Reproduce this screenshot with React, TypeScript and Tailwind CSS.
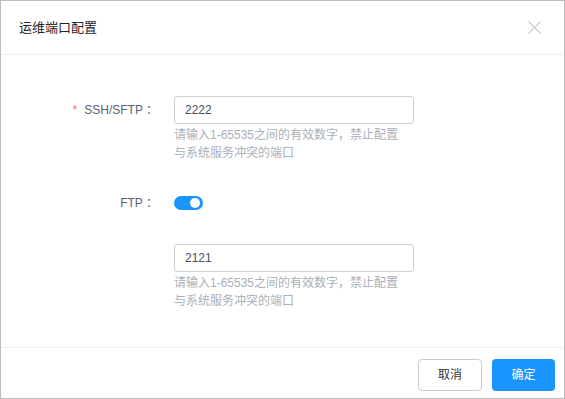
import { useState } from "react";

function Toggle({ on, onChange }: { on: boolean; onChange: (v: boolean) => void }) {
  return (
    <button
      type="button"
      onClick={() => onChange(!on)}
      className={`relative h-[14px] w-[29px] rounded-full ${on ? "bg-[#1a94ff]" : "bg-[#dcdfe6]"}`}
    >
      <span
        className={`absolute top-[2px] h-[10px] w-[10px] rounded-full bg-white ${on ? "left-[16px]" : "left-[3px]"}`}
      />
    </button>
  );
}

function PortField({ value, onChange }: { value: string; onChange: (v: string) => void }) {
  return (
    <div className="w-[240px]">
      <input
        className="h-[28px] w-full rounded-[3px] border border-[#c8d0db] px-[10px] text-[12px] text-[#4a4f57] outline-none"
        value={value}
        onChange={(e) => onChange(e.target.value)}
      />
      <p className="mt-[2px] text-[12px] leading-[18px] text-[#a9b0ba]">
        请输入1-65535之间的有效数字，禁止配置
        <br />
        与系统服务冲突的端口
      </p>
    </div>
  );
}

export default function App() {
  const [ssh, setSsh] = useState("2222");
  const [ftpOn, setFtpOn] = useState(true);
  const [ftp, setFtp] = useState("2121");

  return (
    <div
      className="flex h-[399px] w-[565px] flex-col border border-[#bdbdbd] bg-white"
      style={{ fontFamily: '"Liberation Sans", "Noto Sans CJK SC", sans-serif' }}
    >
      <div className="flex h-[54px] shrink-0 items-center justify-between border-b border-[#eceef2] pl-[18px] pr-[23px]">
        <h2 className="text-[13px] text-[#1f2329]">运维端口配置</h2>
        <svg width="13" height="13" viewBox="0 0 13 13" className="text-[#c5ccd6]">
          <path d="M0.5 0.5 L12.5 12.5 M12.5 0.5 L0.5 12.5" stroke="currentColor" strokeWidth="1.1" />
        </svg>
      </div>

      <div className="flex flex-1 flex-col pt-[41px]">
        <div className="flex">
          <label className="w-[161px] pr-[4px] text-right text-[12px] leading-[28px] text-[#5a6270]">
            <span className="mr-[7px] text-[#f56c6c]">*</span>SSH/SFTP ：
          </label>
          <div className="pl-[12px]">
            <PortField value={ssh} onChange={setSsh} />
          </div>
        </div>

        <div className="mt-[27px] flex">
          <label className="w-[161px] pr-[4px] text-right text-[12px] leading-[28px] text-[#5a6270]">
            FTP ：
          </label>
          <div className="flex items-center pl-[12px]">
            <Toggle on={ftpOn} onChange={setFtpOn} />
          </div>
        </div>

        <div className="mt-[27px] flex">
          <div className="w-[161px]" />
          <div className="pl-[12px]">
            <PortField value={ftp} onChange={setFtp} />
          </div>
        </div>
      </div>

      <div className="flex h-[51px] shrink-0 items-start justify-end gap-[10px] border-t border-[#eceef2] pr-[9px] pt-[11px]">
        <button className="h-[32px] w-[64px] rounded-[4px] border border-[#c8ccd2] bg-white text-[12px] text-[#2f3439]">
          取消
        </button>
        <button className="h-[32px] w-[63px] rounded-[4px] bg-[#1a94ff] text-[12px] text-white">
          确定
        </button>
      </div>
    </div>
  );
}
